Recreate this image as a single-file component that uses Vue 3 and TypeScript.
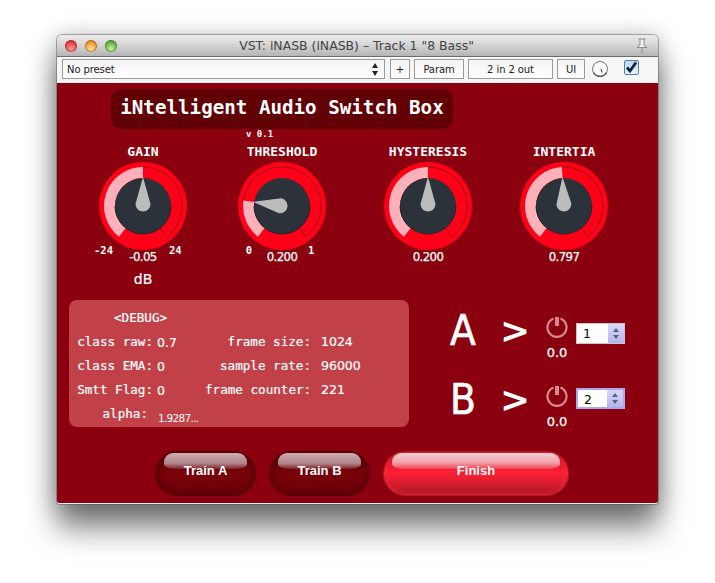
<template>
  <div class="page">
    <div class="window">
      <div class="titlebar">
        <div class="lights">
          <span class="light red"></span>
          <span class="light orange"></span>
          <span class="light green"></span>
        </div>
        <span class="title">VST: iNASB (iNASB) – Track 1 "8 Bass"</span>
        <svg class="pin" width="14" height="16" viewBox="0 0 14 16">
          <path d="M3.500 1h7M5 1v6L2 9.500h10L9 7V1M7 9.500V15.500" fill="#f1f1f1" stroke="#8c8c8c" stroke-width="1" />
        </svg>
      </div>

      <div class="toolbar">
        <div class="tool preset">
          <span>No preset</span>
          <svg width="8" height="15" viewBox="0 0 8 15"><path d="M4 1 7 6H1zM4 14 1 9h6z" fill="#222" /></svg>
        </div>
        <div class="tool plus">+</div>
        <div class="tool param">Param</div>
        <div class="tool io">2 in 2 out</div>
        <div class="tool ui">UI</div>
        <svg class="mini-knob" width="18" height="18" viewBox="0 0 18 18">
          <circle cx="9" cy="9" r="7.500" fill="#fbfbfb" stroke="#777" />
          <path d="M2.500 12.500a7.500 7.500 0 0 0 13 0" fill="none" stroke="#555" stroke-width="1.500" />
          <path d="M10 9 11 12.500" stroke="#333" />
        </svg>
        <div class="check">
          <svg width="13" height="13" viewBox="0 0 13 13"><path d="M2 6.500 5 10 11 1.500" fill="none" stroke="#12233f" stroke-width="2.800" /></svg>
        </div>
      </div>

      <div class="plugin">
        <div class="heading">iNtelligent Audio Switch Box</div>
        <div class="version">v 0.1</div>

        <div class="knobs">
          <div v-for="k in knobs" :key="k.name" class="knob">
            <div class="knob-name">{{ k.name }}</div>
            <div class="dial">
              <svg width="88" height="88" viewBox="-44 -44 88 88">
                <circle r="44" fill="#ff0018" />
                <path :d="track(k.angle, 142)" fill="none" stroke="#8a0010" stroke-width="0.800" />
                <path :d="arc(-142, k.angle)" fill="#ffb0b8" />
                <circle r="28" fill="#2c3239" />
                <path d="M-28 0a28 28 0 0 0 56 0" fill="none" stroke="#20252a" stroke-width="1" />
                <path
                  d="M0 -29 L7.500 -2 A7.500 7.500 0 1 1 -7.500 -2 Z"
                  fill="#bcbcbc"
                  :transform="`rotate(${k.angle})`"
                />
              </svg>
              <span v-if="k.min" class="scale scale-min">{{ k.min }}</span>
              <span v-if="k.max" class="scale scale-max">{{ k.max }}</span>
            </div>
            <div class="knob-value">{{ k.value }}</div>
            <div v-if="k.unit" class="knob-unit">{{ k.unit }}</div>
          </div>
        </div>

        <div class="lower">
          <div class="debug">
            <div class="debug-head">&lt;DEBUG&gt;</div>
            <template v-for="r in debugRows" :key="r.label">
              <div class="dlabel">{{ r.label }}</div>
              <div class="dvalue">{{ r.value }}</div>
              <div class="dlabel">{{ r.label2 }}</div>
              <div class="dvalue dvalue2">{{ r.value2 }}</div>
            </template>
            <div class="dlabel alpha">alpha:</div>
            <div class="dvalue alpha-value">1.9287...</div>
          </div>

          <div class="routes">
            <div v-for="r in routes" :key="r.letter" class="route">
              <div class="letter">{{ r.letter }}</div>
              <div class="arrow">&gt;</div>
              <div class="power">
                <svg width="24" height="24" viewBox="0 0 24 24">
                  <path d="M8.500 3.500a9.500 9.500 0 1 0 7 0" fill="none" stroke="#d68a90" stroke-width="2.200" />
                  <path d="M12 2V11" stroke="#d68a90" stroke-width="4" />
                </svg>
                <span>0.0</span>
              </div>
              <div class="combo" :class="{ focused: r.focused }">
                <span class="combo-text">{{ r.channel }}</span>
                <span class="combo-btn">
                  <svg width="8" height="13" viewBox="0 0 8 13"><path d="M4 1 7 5H1zM4 12 1 8h6z" fill="#5c6278" /></svg>
                </span>
              </div>
            </div>
          </div>
        </div>

        <div class="buttons">
          <div class="gloss train"><span>Train A</span></div>
          <div class="gloss train"><span>Train B</span></div>
          <div class="gloss finish"><span>Finish</span></div>
        </div>
      </div>
    </div>
  </div>
</template>

<script setup lang="ts">
interface Knob {
  name: string;
  angle: number;
  value: string;
  min?: string;
  max?: string;
  unit?: string;
}

const knobs: Knob[] = [
  { name: 'GAIN', angle: 0, value: '-0.05', min: '-24', max: '24', unit: 'dB' },
  { name: 'THRESHOLD', angle: -82, value: '0.200', min: '0', max: '1' },
  { name: 'HYSTERESIS', angle: 0, value: '0.200' },
  { name: 'INTERTIA', angle: -3, value: '0.797' },
];

const debugRows = [
  { label: 'class raw:', value: '0.7', label2: 'frame size:', value2: '1024' },
  { label: 'class EMA:', value: '0', label2: 'sample rate:', value2: '96000' },
  { label: 'Smtt Flag:', value: '0', label2: 'frame counter:', value2: '221' },
];

const routes = [
  { letter: 'A', channel: '1', focused: false },
  { letter: 'B', channel: '2', focused: true },
];

const OUTER = 39;
const INNER = 28;

function pt(r: number, deg: number): string {
  const a = (deg * Math.PI) / 180;
  return `${(r * Math.sin(a)).toFixed(2)} ${(-r * Math.cos(a)).toFixed(2)}`;
}

// filled ring segment between the dark centre and the outer rim, angles from 12 o'clock
function arc(from: number, to: number): string {
  const large = Math.abs(to - from) > 180 ? 1 : 0;
  return (
    `M${pt(OUTER, from)} A${OUTER} ${OUTER} 0 ${large} 1 ${pt(OUTER, to)} ` +
    `L${pt(INNER, to)} A${INNER} ${INNER} 0 ${large} 0 ${pt(INNER, from)} Z`
  );
}

// thin outline of the unfilled part: outer edge plus the closing end
function track(from: number, to: number): string {
  const large = Math.abs(to - from) > 180 ? 1 : 0;
  return `M${pt(OUTER, from)} A${OUTER} ${OUTER} 0 ${large} 1 ${pt(OUTER, to)} L${pt(INNER, to)}`;
}
</script>

<style>
html,
body {
  margin: 0;
  background: #fff;
}
</style>

<style scoped>
.page {
  height: 583px;
  box-sizing: border-box;
  padding: 35px 0 0 57px;
  overflow: hidden;
}

.window {
  width: 601px;
  height: 469px;
  border-radius: 5px 5px 3px 3px;
  box-shadow: 0 0 0 1px rgba(80, 80, 80, 0.45), 0 24px 30px rgba(0, 0, 0, 0.5), 0 2px 24px rgba(0, 0, 0, 0.28);
  font-family: 'DejaVu Sans', sans-serif;
  display: flex;
  flex-direction: column;
}

.titlebar {
  height: 22px;
  flex: none;
  display: flex;
  align-items: center;
  position: relative;
  justify-content: center;
  box-sizing: border-box;
  border-bottom: 1px solid #6a6a6a;
  border-radius: 5px 5px 0 0;
  background: linear-gradient(#ececec, #d8d8d8 40%, #b5b5b5);
}

.lights {
  position: absolute;
  left: 8px;
  top: 5px;
  display: flex;
  gap: 8px;
}

.light {
  width: 12px;
  height: 12px;
  border-radius: 50%;
  box-shadow: inset 0 0 0 1px rgba(0, 0, 0, 0.25);
}

.red {
  background: radial-gradient(circle at 50% 75%, #ff9a98, #e0303a 70%);
}

.orange {
  background: radial-gradient(circle at 50% 75%, #ffe09a, #e88d22 70%);
}

.green {
  background: radial-gradient(circle at 50% 75%, #c6f0a0, #58a838 70%);
}

.title {
  font-size: 12.450px;
  color: #444;
  margin-right: 2px;
}

.pin {
  position: absolute;
  right: 9px;
  top: 3px;
}

.toolbar {
  height: 26px;
  flex: none;
  box-sizing: border-box;
  background: #f6f6f6;
  padding: 2px 5px 0;
  display: flex;
  gap: 4px;
  font-size: 10px;
  letter-spacing: -0.100px;
  color: #222;
}

.tool {
  height: 20px;
  box-sizing: border-box;
  border: 1px solid #9a9a9a;
  background: linear-gradient(#f4f4f4, #fff);
  display: flex;
  align-items: center;
  justify-content: center;
}

.preset {
  width: 323px;
  justify-content: space-between;
  padding: 0 5px 0 4px;
  margin-right: 1px;
}

.plus {
  width: 20px;
}

.param {
  width: 50px;
}

.io {
  width: 85px;
}

.ui {
  width: 28px;
}

.mini-knob {
  margin: 1px 0 0 2px;
}

.check {
  width: 15px;
  height: 15px;
  margin: 1px 0 0 11px;
  box-sizing: border-box;
  border: 1px solid #5a78a8;
  border-radius: 2px;
  background: linear-gradient(#bcd8f4, #e4f2fc);
  display: flex;
  align-items: center;
  justify-content: center;
}

.plugin {
  flex: 1;
  background: #8a000f;
  border-bottom: 1px solid #f4f4f4;
  border-radius: 0 0 3px 3px;
  box-sizing: border-box;
  color: #fff;
  padding-top: 6px;
}

.heading {
  width: 342px;
  height: 40px;
  margin-left: 54px;
  border-radius: 10px;
  background: #610005;
  font-family: 'DejaVu Sans Mono', monospace;
  font-weight: 700;
  font-size: 19.200px;
  line-height: 38px;
  text-align: center;
}

.version {
  height: 10px;
  margin: 0 0 5px 189px;
  font-family: 'DejaVu Sans Mono', monospace;
  font-weight: 700;
  font-size: 9px;
  line-height: 11px;
}

.knobs {
  display: grid;
  grid-template-columns: 139px 146px 136px 88px;
  padding-left: 42px;
  height: 156px;
  text-align: center;
}

.knob {
  width: 88px;
}

.knob-name {
  height: 16px;
  margin-bottom: 2px;
  font-family: 'DejaVu Sans Mono', monospace;
  font-weight: 700;
  font-size: 13px;
  line-height: 16px;
}

.dial {
  height: 88px;
  position: relative;
}

.scale {
  position: absolute;
  top: 82px;
  font-family: 'DejaVu Sans Mono', monospace;
  font-weight: 700;
  font-size: 10.500px;
  line-height: 12px;
}

.scale-min {
  right: 74px;
}

.scale-max {
  left: 70px;
}

.knob-value {
  height: 14px;
  font-size: 13px;
  line-height: 14px;
  font-stretch: condensed;
  letter-spacing: -0.600px;
  -webkit-text-stroke: 0.250px #fff;
}

.knob-unit {
  margin-top: 7px;
  height: 16px;
  font-size: 14px;
  line-height: 16px;
  -webkit-text-stroke: 0.200px #fff;
}

.lower {
  display: flex;
  margin-left: 12px;
  gap: 41px;
}

.debug {
  width: 340px;
  height: 127px;
  box-sizing: border-box;
  border-radius: 8px;
  background: #c24047;
  padding: 5px 0 0 8px;
  display: grid;
  grid-template-columns: 76px 52px 106px auto;
  grid-auto-rows: 24px;
  align-items: center;
  font-family: 'DejaVu Sans Mono', monospace;
  font-size: 12.600px;
  -webkit-text-stroke: 0.200px #fff;
}

.debug-head {
  grid-column: 1 / -1;
  padding-left: 37px;
}

.dlabel {
  text-align: right;
  white-space: nowrap;
}

.dvalue {
  font-family: 'DejaVu Sans', sans-serif;
  font-size: 12.500px;
  padding-left: 4px;
  padding-top: 2px;
}

.dvalue2 {
  padding-left: 10px;
  padding-top: 0;
}

.alpha {
  padding-right: 5px;
}

.alpha-value {
  grid-column: 2 / -1;
  font-size: 10.500px;
  letter-spacing: -0.700px;
  padding-top: 9px;
  padding-left: 5px;
  -webkit-text-stroke: 0;
}

.routes {
  display: flex;
  flex-direction: column;
  gap: 21px;
  margin-top: 13px;
}

.route {
  height: 48px;
  display: grid;
  grid-template-columns: 50px 45px 24px auto;
  align-items: start;
}

.letter {
  font-size: 42px;
  line-height: 36px;
  font-stretch: condensed;
  -webkit-text-stroke: 0.600px #fff;
}

.arrow {
  font-size: 36px;
  line-height: 36px;
  font-weight: 700;
}

.power {
  display: flex;
  flex-direction: column;
  align-items: center;
  margin-top: 2px;
  font-size: 13px;
  line-height: 14px;
  -webkit-text-stroke: 0.250px #fff;
}

.power span {
  margin-top: 7px;
  white-space: nowrap;
}

.combo {
  width: 49px;
  height: 21px;
  margin: 10px 0 0 7px;
  box-sizing: border-box;
  border: 1px solid #c8c8c8;
  background: #fff;
  display: flex;
  color: #000;
  font-size: 12.500px;
}

.route + .route .combo {
  margin-top: 6px;
}

.focused {
  border: 2px solid #a8a8f0;
}

.combo-text {
  flex: 1;
  padding-left: 6px;
  line-height: 19px;
}

.combo-btn {
  width: 16px;
  background: linear-gradient(#d8d8fa, #b4b4ee);
  display: flex;
  align-items: center;
  justify-content: center;
}

.buttons {
  display: flex;
  gap: 13px;
  margin: 21px 0 0 98px;
}

.gloss {
  height: 45px;
  box-sizing: border-box;
  position: relative;
  padding-bottom: 6px;
  border-radius: 22px;
  display: flex;
  align-items: center;
  justify-content: center;
  font-family: 'Liberation Sans', sans-serif;
  font-size: 13px;
  font-weight: 700;
}

.gloss span {
  position: relative;
}

.gloss::before {
  content: '';
  position: absolute;
  top: 1px;
  left: 8px;
  right: 8px;
  height: 16px;
  border-radius: 9px 9px 12px 12px / 9px 9px 5px 5px;
}

.train {
  width: 101px;
  border: 1px solid #5c0008;
  background: linear-gradient(#5e0007, #78020a 50%, #6c0008);
  box-shadow: inset 0 0 8px rgba(50, 0, 5, 0.55);
}

.train::before {
  background: linear-gradient(#cfacaf, #b08488 65%, rgba(130, 40, 48, 0.8));
}

.finish {
  width: 186px;
  border: 1px solid #b51824;
  background: linear-gradient(#b8141f, #ff2036 48%, #d41c2c 75%, #b01826 96%, #c82434);
  box-shadow: inset 3px 0 6px rgba(255, 50, 70, 0.35), inset -3px 0 6px rgba(255, 50, 70, 0.35);
}

.finish::before {
  background: linear-gradient(#f4d0d4, #f2a0a8 60%, rgba(242, 80, 96, 0.7));
}
</style>
